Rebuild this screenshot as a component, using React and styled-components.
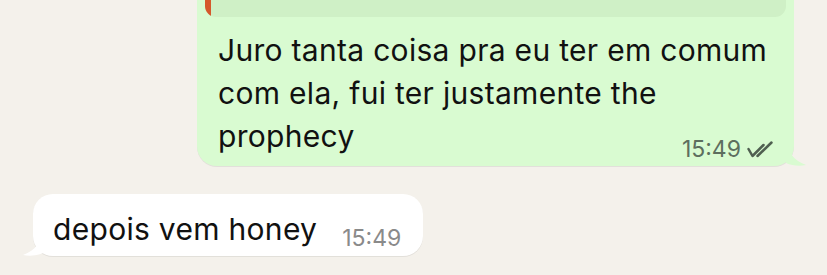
import React from "react";
import styled, { createGlobalStyle } from "styled-components";

const GlobalStyle = createGlobalStyle`
  html, body {
    margin: 0;
    padding: 0;
    background: #f4f1eb;
  }
  body {
    font-family: Inter, "Noto Sans", sans-serif;
  }
`;

const messages = [
  {
    id: 1,
    out: true,
    quote: true,
    text: "Juro tanta coisa pra eu ter em comum com ela, fui ter justamente the prophecy",
    time: "15:49",
    read: true,
  },
  {
    id: 2,
    out: false,
    text: "depois vem honey",
    time: "15:49",
  },
];

const Chat = styled.div`
  height: 275px;
  overflow: hidden;
  display: flex;
  flex-direction: column;
  justify-content: flex-end;
  gap: 28px;
  padding-bottom: 19px;
  box-sizing: border-box;
`;

const Row = styled.div`
  display: flex;
  justify-content: ${(p) => (p.$out ? "flex-end" : "flex-start")};
  padding: ${(p) => (p.$out ? "0 33px 0 0" : "0 0 0 33px")};
`;

const Bubble = styled.div`
  position: relative;
  box-sizing: border-box;
  width: ${(p) => (p.$out ? "597px" : "auto")};
  background: ${(p) => (p.$out ? "#d9fbd1" : "#ffffff")};
  border-radius: 20px;
  padding: ${(p) => (p.$out ? "8px 21px 5px 8px" : "0 22px 0 20px")};
  box-shadow: 0 1px 0.5px rgba(0, 0, 0, 0.07);
  color: #111;
`;

const Tail = styled.svg`
  position: absolute;
  bottom: 0;
  width: 22px;
  height: 24px;
  ${(p) => (p.$out ? "right: -14px;" : "left: -12px; transform: scaleX(-1);")}
  fill: ${(p) => (p.$out ? "#d9fbd1" : "#ffffff")};
`;

const Quote = styled.div`
  display: flex;
  height: 44px;
  margin-right: -13px;
  background: #cff0c6;
  border-radius: 11px;
  overflow: hidden;
`;

const QuoteBar = styled.div`
  width: 6px;
  flex: none;
  background: #d5582b;
`;

const Text = styled.div`
  padding: 12px 0 0 13px;
  font-size: 30px;
  line-height: 43px;
  letter-spacing: 0.3px;
`;

const Meta = styled.span`
  float: right;
  display: inline-flex;
  align-items: center;
  gap: 6px;
  margin-top: 22px;
  font-size: 23px;
  line-height: 24px;
  letter-spacing: 0;
  color: #5d6e5e;
`;

const InlineRow = styled.div`
  display: flex;
  align-items: flex-end;
  gap: 25px;
  height: 62px;
  padding-bottom: 9px;
  box-sizing: border-box;
`;

const Plain = styled.span`
  font-size: 30px;
  line-height: 36px;
  letter-spacing: 0.3px;
`;

const Time = styled.span`
  font-size: 23px;
  line-height: 24px;
  color: #8a8a8a;
  margin-bottom: -3px;
`;

const Ticks = () => (
  <svg width="26" height="17" viewBox="0 0 26 17" fill="none" stroke="#4f5f50" strokeWidth="2.5" strokeLinecap="round" strokeLinejoin="round">
    <path d="M1.5 8 L5.5 15 L16.5 4" />
    <path d="M10.5 15 L24.5 1.5" />
  </svg>
);

const BubbleTail = ({ out }) => (
  <Tail $out={out} viewBox="0 0 22 24">
    <path d="M0 0 L2 0 C2 10 7 18 20 23 C13 24.5 6 23.5 0 21 Z" />
  </Tail>
);

export default function App() {
  return (
    <>
      <GlobalStyle />
      <Chat>
        {messages.map((m) => (
          <Row key={m.id} $out={m.out}>
            <Bubble $out={m.out}>
              {m.quote && (
                <Quote>
                  <QuoteBar />
                </Quote>
              )}
              {m.out ? (
                <Text>
                  {m.text}
                  <Meta>
                    {m.time}
                    {m.read && <Ticks />}
                  </Meta>
                </Text>
              ) : (
                <InlineRow>
                  <Plain>{m.text}</Plain>
                  <Time>{m.time}</Time>
                </InlineRow>
              )}
              <BubbleTail out={m.out} />
            </Bubble>
          </Row>
        ))}
      </Chat>
    </>
  );
}
